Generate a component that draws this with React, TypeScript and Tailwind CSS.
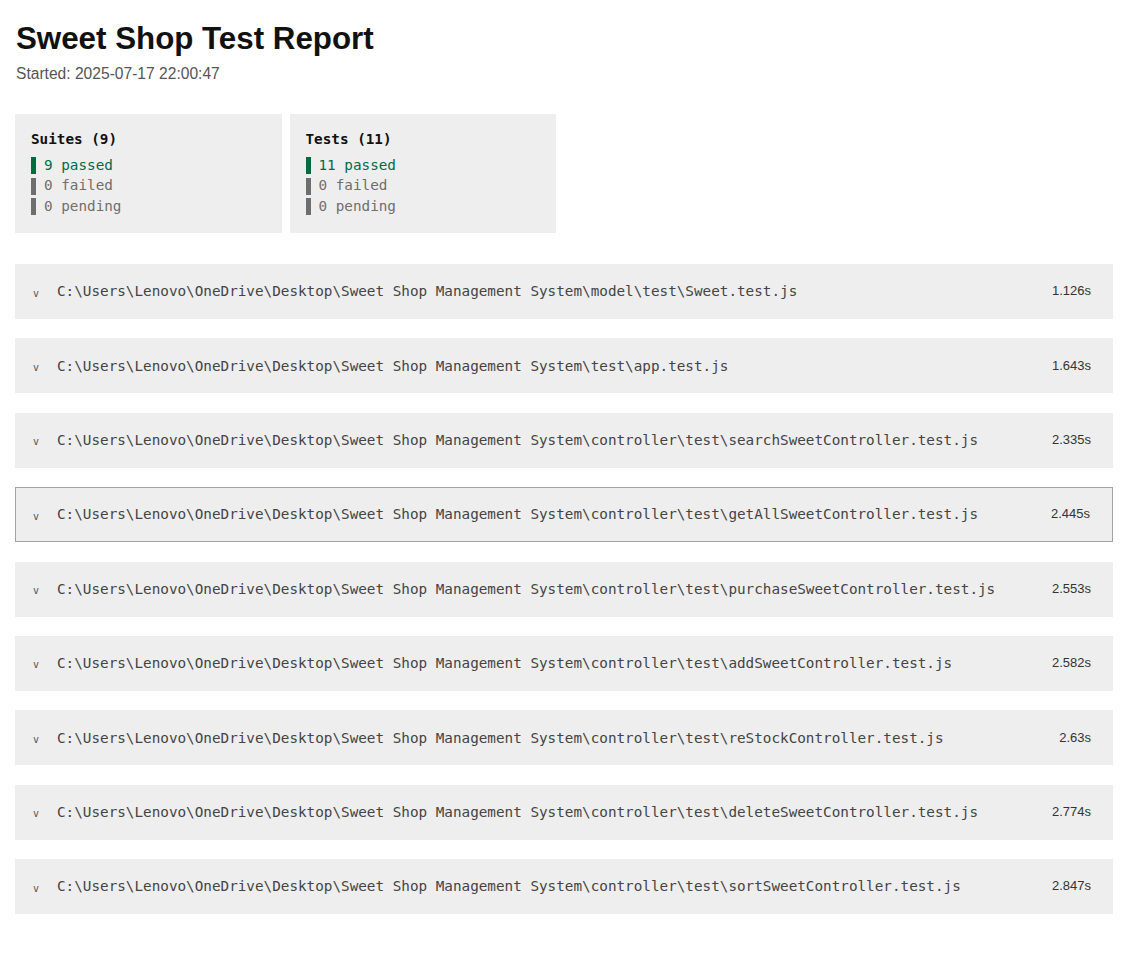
const mono = "font-['DejaVu_Sans_Mono','Liberation_Mono',monospace]";
const base = "C:\\Users\\Lenovo\\OneDrive\\Desktop\\Sweet Shop Management System\\";

const suites = [
    { path: "model\\test\\Sweet.test.js", time: "1.126s" },
    { path: "test\\app.test.js", time: "1.643s" },
    { path: "controller\\test\\searchSweetController.test.js", time: "2.335s" },
    { path: "controller\\test\\getAllSweetController.test.js", time: "2.445s", focused: true },
    { path: "controller\\test\\purchaseSweetController.test.js", time: "2.553s" },
    { path: "controller\\test\\addSweetController.test.js", time: "2.582s" },
    { path: "controller\\test\\reStockController.test.js", time: "2.63s" },
    { path: "controller\\test\\deleteSweetController.test.js", time: "2.774s" },
    { path: "controller\\test\\sortSweetController.test.js", time: "2.847s" },
];

function SummaryBox({ title, passed }: { title: string; passed: number }) {
    return (
        <div className="w-[266.5px] h-[119px] bg-[#eeeeee] pt-[15px] pl-4">
            <h3 className={`${mono} text-[14.3px] leading-[20px] font-bold text-[#111]`}>{title}</h3>
            <div className={`${mono} text-[14.3px] mt-[8px] flex flex-col gap-[3.5px]`}>
                <div className="flex items-center h-[17px]">
                    <span className="w-[5px] h-[17px] bg-[#006b3c]" />
                    <span className="ml-[8px] text-[#006b47]">{passed} passed</span>
                </div>
                <div className="flex items-center h-[17px]">
                    <span className="w-[5px] h-[17px] bg-[#6e6e6e]" />
                    <span className="ml-[8px] text-[#6e6e6e]">0 failed</span>
                </div>
                <div className="flex items-center h-[17px]">
                    <span className="w-[5px] h-[17px] bg-[#6e6e6e]" />
                    <span className="ml-[8px] text-[#6e6e6e]">0 pending</span>
                </div>
            </div>
        </div>
    );
}

export default function App() {
    return (
        <div className="min-h-[958px] bg-white px-[15px] pt-[20px] font-['Liberation_Sans',Arial,sans-serif]">
            <h1 className="text-[31.3px] leading-[37px] font-bold text-[#111] pl-px">Sweet Shop Test Report</h1>
            <p className="mt-[8px] text-[15.6px] leading-[18px] text-[#555] pl-px">Started: 2025-07-17 22:00:47</p>

            <div className="mt-[31px] flex gap-[8px]">
                <SummaryBox title="Suites (9)" passed={9} />
                <SummaryBox title="Tests (11)" passed={11} />
            </div>

            <div className="mt-[31px] w-[1098px] flex flex-col gap-[19.4px]">
                {suites.map((s) => (
                    <div
                        key={s.path}
                        className={`h-[55px] bg-[#eeeeee] flex items-center pr-[22px] ${s.focused ? "border border-[#a3a3a3] pl-[17px]" : "pl-[18px]"}`}
                    >
                        <span className={`${mono} w-[24px] text-[10px] text-[#555] pt-[3px]`}>v</span>
                        <span className={`${mono} text-[14.3px] text-[#444] flex-1 pt-[1px]`}>{base + s.path}</span>
                        <span className="text-[13px] text-[#333] -mt-[1px]">{s.time}</span>
                    </div>
                ))}
            </div>
        </div>
    );
}
